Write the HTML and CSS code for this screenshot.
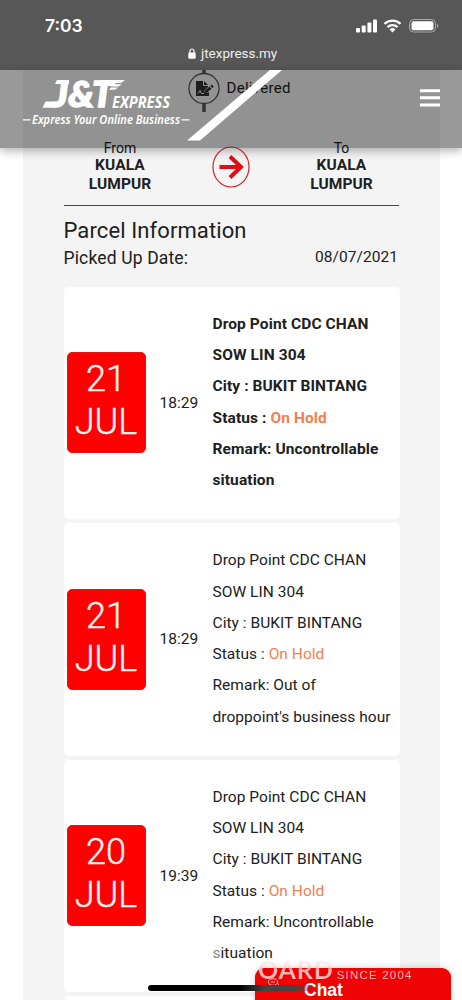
FILE: index.html
```html
<!DOCTYPE html>
<html lang="en">
<head>
<meta charset="utf-8">
<title>J&amp;T Express tracking</title>
<link rel="stylesheet" href="styles.css">
</head>
<body>
<div class="screen">
  <main class="panel">
    <div class="step">
      <svg class="step-icon" width="34" height="44" viewBox="0 0 34 44">
        <path d="M17 0v6M17 35v9" stroke="#555" stroke-width="3.5"/>
        <circle cx="17" cy="20.500" r="15" fill="none" stroke="#555" stroke-width="1.3"/>
        <path d="M9 13h8l4 4v2l-4 4v2h3l2-1v4H9z" fill="#333"/>
        <path d="M16.500 13v4.500H21" fill="none" stroke="#f4f4f4" stroke-width="1"/>
        <path d="M11 25.500l2-3 1.500 3H17" fill="none" stroke="#f4f4f4" stroke-width="1"/>
        <path d="M17.500 23l5-4.500 2 2.200-5 4.300-2.500.5zM23.300 17.800l1.500-1.200 2 2.200-1.500 1.200z" fill="#333"/>
      </svg>
      <span class="step-name">Delivered</span>
    </div>
    <section class="route">
      <div class="place"><span>From</span><b>KUALA<br>LUMPUR</b></div>
      <svg class="arrow" width="38" height="42" viewBox="0 0 38 42">
        <ellipse cx="19" cy="21" rx="18" ry="20" fill="none" stroke="#d5232b" stroke-width="1.2"/>
        <path d="M7.500 21h21M18 10.500L29 21 18 31.500" fill="none" stroke="#e50b14" stroke-width="4"/>
      </svg>
      <div class="place"><span>To</span><b>KUALA<br>LUMPUR</b></div>
    </section>
    <h1 class="title">Parcel Information</h1>
    <div class="picked"><span>Picked Up Date:</span><span class="date">08/07/2021</span></div>
    <section class="events">
      <article class="card latest">
        <div class="day"><span>21</span><span>JUL</span></div>
        <time class="time">18:29</time>
        <div class="info">Drop Point CDC CHAN<br>SOW LIN 304<br>City : BUKIT BINTANG<br>Status : <span class="hold">On Hold</span><br>Remark: Uncontrollable<br>situation</div>
      </article>
      <article class="card">
        <div class="day"><span>21</span><span>JUL</span></div>
        <time class="time">18:29</time>
        <div class="info">Drop Point CDC CHAN<br>SOW LIN 304<br>City : BUKIT BINTANG<br>Status : <span class="hold">On Hold</span><br>Remark: Out of<br>droppoint's business hour</div>
      </article>
      <article class="card">
        <div class="day"><span>20</span><span>JUL</span></div>
        <time class="time">19:39</time>
        <div class="info">Drop Point CDC CHAN<br>SOW LIN 304<br>City : BUKIT BINTANG<br>Status : <span class="hold">On Hold</span><br>Remark: Uncontrollable<br><span class="faded">s</span>ituation</div>
      </article>
      <article class="card"></article>
    </section>
  </main>

  <header class="top">
    <div class="status">
      <div class="clock-row">
        <span class="clock">7:03</span>
        <svg width="84" height="16" viewBox="0 0 84 16" fill="#fff">
          <rect x="0" y="10" width="4" height="4.500" rx="1"/><rect x="5.700" y="7.500" width="4" height="7" rx="1"/><rect x="11.400" y="4.500" width="4" height="10" rx="1"/><rect x="17" y="1.500" width="4" height="13" rx="1"/>
          <path d="M28.500 5.800a11.500 11.500 0 0 1 16 0M31.500 9.200a7.200 7.200 0 0 1 10 0" fill="none" stroke="#fff" stroke-width="2.300"/>
          <path d="M36.500 14.500l-3-3a4.300 4.300 0 0 1 6 0z"/>
          <rect x="53.500" y="1.500" width="26" height="12.500" rx="4" fill="none" stroke="#aaa" stroke-width="1"/>
          <rect x="55.500" y="3.300" width="22" height="9" rx="2"/>
          <path d="M81 5.500q2.500 2.300 0 4.500z" fill="#aaa"/>
        </svg>
      </div>
      <div class="address">
        <svg width="8" height="11" viewBox="0 0 8 11"><rect x=".3" y="4.500" width="7.400" height="6.300" rx="1" fill="#fff"/><path d="M2 5V3a2 2 0 0 1 4 0v2" fill="none" stroke="#fff" stroke-width="1.200"/></svg>
        <span>jtexpress.my</span>
      </div>
    </div>
    <div class="brandbar">
      <svg class="brand" width="300" height="78" viewBox="0 0 300 78" fill="#fff">
        <path d="M270 0h12L200 70.500h-13z"/>
        <path d="M45.500 31.500H58l-2 6.300H42.500zM57 10h12v4H55zM100 10h25l-4 3h-20zM112 14.200h10l-3.500 2.400h-8zM111 17.600h7l-3 2.200h-6z"/>
        <text class="logo-main" x="52.500" y="37" textLength="61" lengthAdjust="spacingAndGlyphs">J&amp;T</text>
        <text class="logo-sub" x="112" y="37.500" textLength="58" lengthAdjust="spacingAndGlyphs">EXPRESS</text>
        <text class="tagline" x="32" y="53.500" textLength="148" lengthAdjust="spacingAndGlyphs">Express Your Online Business</text>
        <path d="M23 49.300h7.500v1.300H23zM181.500 49.300h8v1.300h-8z"/>
      </svg>
      <svg class="menu" width="20" height="18" viewBox="0 0 20 18"><path d="M0 1.700h20M0 8.800h20M0 15.900h20" stroke="#fff" stroke-width="3"/></svg>
    </div>
  </header>

  <div class="chat">
    <svg class="chat-icon" width="14" height="10" viewBox="0 0 14 10" fill="none" stroke="#ffb0b0" stroke-width="1"><ellipse cx="6" cy="4" rx="4.500" ry="3.300"/><path d="M3 6.500L1.500 9M10 5q3 2 2.500 4M4 4h4"/></svg>
    <span>Chat</span>
  </div>
  <div class="home-bar"></div>
  <div class="watermark"><span class="wm-word">OARD</span><span class="wm-since">SINCE 2004</span></div>
</div>
</body>
</html>
```
FILE: styles.css
```css
* { box-sizing: border-box; }
body { margin: 0; background: #fff; }
.screen {
  position: relative;
  width: 462px;
  height: 1000px;
  overflow: hidden;
  background: #fff;
  color: #202020;
  font-family: Roboto, "Liberation Sans", sans-serif;
}
.panel {
  width: 417px;
  height: 1000px;
  margin-left: 23px;
  padding: 68px 41px 0 40.500px;
  background: #f4f4f4;
}
.step { display: flex; height: 72px; margin-left: 123px; }
.step-icon { flex: none; }
.step-name { margin: 10px 0 0 6px; font-size: 15px; line-height: 20px; letter-spacing: .3px; }
.route {
  display: flex;
  justify-content: space-between;
  height: 66px;
  border-bottom: 1px solid #c01822;
}
.place {
  display: flex;
  flex-direction: column;
  align-items: center;
  width: 113px;
  text-align: center;
  font-size: 14px;
  line-height: 16px;
}
.place:last-child { width: 115px; }
.place b { font-size: 15.500px; line-height: 19px; letter-spacing: .1px; }
.arrow { margin: 6px -1px 0 1px; }
.title { margin: 11px 0 0; font-size: 22px; line-height: 28px; font-weight: 400; letter-spacing: .1px; }
.picked { display: flex; justify-content: space-between; height: 41.500px; font-size: 17.5px; line-height: 26px; letter-spacing: .15px; }
.date { padding-right: 1px; font-size: 15.5px; line-height: 24px; letter-spacing: .05px; }
.events { display: flex; flex-direction: column; gap: 4px; }
.card {
  display: flex;
  align-items: center;
  flex: none;
  width: 336px;
  height: 232.500px;
  padding: 0 0 .5px 3px;
  background: #fff;
  border-radius: 5px;
}
.day {
  display: flex;
  flex-direction: column;
  justify-content: center;
  align-items: center;
  width: 79px;
  height: 101px;
  padding-bottom: 3px;
  border-radius: 5px;
  background: #fe0000;
  border: 1px solid #e51515;
  color: #fff3ee;
  font-size: 36px;
  line-height: 43px;
  font-weight: 300;
  -webkit-text-stroke: .4px #fff3ee;
}
.time { width: 67px; padding-left: 14px; font-size: 15.500px; }
.info { font-size: 15.500px; line-height: 31.250px; white-space: nowrap; letter-spacing: .04px; }
.latest .info { font-weight: 700; letter-spacing: .1px; }
.hold { color: #f17f51; }
.faded { color: #888; }

.top { position: absolute; inset: 0 0 auto; }
.status { height: 70px; padding-top: 16px; background: #575757; color: #fff; }
.clock-row { display: flex; justify-content: space-between; align-items: center; height: 19px; padding: 0 22px 0 45px; }
.clock { font-family: Inter, sans-serif; font-size: 17.500px; font-weight: 600; line-height: 19px; }
.address { display: flex; align-items: center; gap: 5px; padding: 9px 0 0 188px; font-size: 13.500px; line-height: 18px; color: #eee; }
.brandbar {
  display: flex;
  justify-content: space-between;
  height: 78px;
  padding-right: 22px;
  background: rgba(0, 0, 0, .4);
  box-shadow: 0 3px 9px rgba(0, 0, 0, .3);
}
.menu { margin-top: 19px; }
.logo-main { font: italic 900 36.500px Lato, sans-serif; stroke: #fff; stroke-width: 1.400px; }
.logo-sub { font: italic 700 15.500px "Open Sans", sans-serif; }
.tagline { font: italic 600 12.500px "Noto Sans", sans-serif; }
.address span { letter-spacing: -.02px; }

.chat {
  position: absolute;
  left: 255px;
  top: 968px;
  display: flex;
  align-items: center;
  width: 196px;
  height: 40px;
  padding: 3px 0 0 12px;
  border-radius: 9px;
  background: #ee0202;
  box-shadow: 0 0 7px rgba(0, 0, 0, .2);
  color: #fff;
  font: 700 17.500px/20px "Liberation Sans", sans-serif;
}
.chat-icon { margin: -14px 23px 0 0; }
.home-bar {
  position: absolute;
  left: 148px;
  top: 985px;
  width: 166px;
  height: 6px;
  border-radius: 3px;
  background: linear-gradient(90deg, #000 0 55%, #444 70%, #444 88%, transparent);
}
.watermark {
  position: absolute;
  left: 258px;
  top: 957px;
  display: flex;
  align-items: baseline;
  gap: 3px;
  color: #ffb7b7;
}
.wm-word {
  font: 700 25px/24px Lato, sans-serif;
  letter-spacing: .9px;
  color: transparent;
  background: linear-gradient(rgba(255, 200, 200, .35) 35%, #ffb7b7 55%);
  -webkit-background-clip: text;
  background-clip: text;
}
.wm-since { font: 400 11.500px/14px "Liberation Sans", sans-serif; letter-spacing: 1.200px; }
```
